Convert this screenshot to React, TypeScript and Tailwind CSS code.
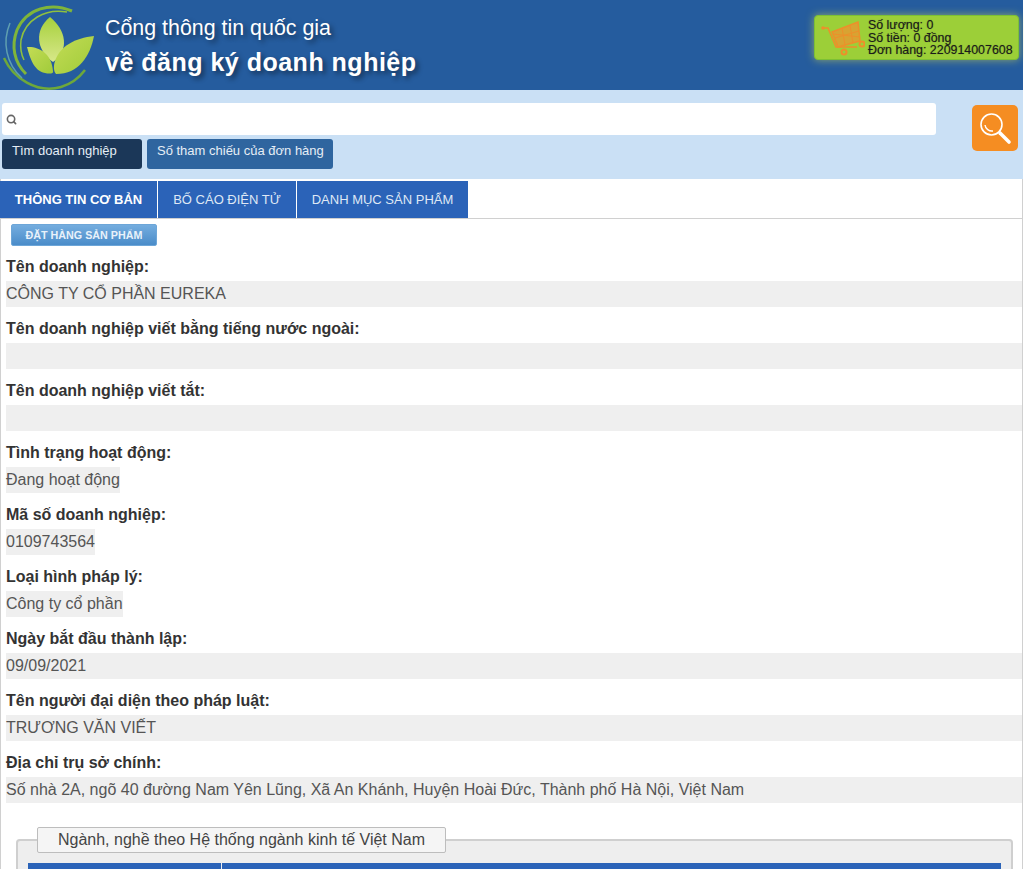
import { Search } from 'lucide-react'

const fields = [
  { label: 'Tên doanh nghiệp:', value: 'CÔNG TY CỔ PHẦN EUREKA', full: true },
  { label: 'Tên doanh nghiệp viết bằng tiếng nước ngoài:', value: '', full: true },
  { label: 'Tên doanh nghiệp viết tắt:', value: '', full: true },
  { label: 'Tình trạng hoạt động:', value: 'Đang hoạt động', full: false },
  { label: 'Mã số doanh nghiệp:', value: '0109743564', full: false },
  { label: 'Loại hình pháp lý:', value: 'Công ty cổ phần', full: false },
  { label: 'Ngày bắt đầu thành lập:', value: '09/09/2021', full: true },
  { label: 'Tên người đại diện theo pháp luật:', value: 'TRƯƠNG VĂN VIẾT', full: true },
  {
    label: 'Địa chỉ trụ sở chính:',
    value: 'Số nhà 2A, ngõ 40 đường Nam Yên Lũng, Xã An Khánh, Huyện Hoài Đức, Thành phố Hà Nội, Việt Nam',
    full: true,
  },
]

function Logo() {
  return (
    <svg width="96" height="90" viewBox="0 0 96 90" className="shrink-0">
      <defs>
        <linearGradient id="leaf" x1="0" y1="0" x2="0" y2="1">
          <stop offset="0" stopColor="#a6d03c" />
          <stop offset="1" stopColor="#d8e88a" />
        </linearGradient>
        <linearGradient id="leafSide" x1="0" y1="0" x2="1" y2="1">
          <stop offset="0" stopColor="#c3dc55" />
          <stop offset="1" stopColor="#a0cb3a" />
        </linearGradient>
      </defs>
      <path d="M71 11 C50 2 26 8 16 30 C10 46 13 62 25 74" fill="none" stroke="#7fb53a" strokeWidth="3" />
      <path d="M66 12 C44 8 24 20 20 40 C19 48 20 54 23 60" fill="none" stroke="#8fc03f" strokeWidth="1.5" />
      <path d="M3 58 C12 78 36 94 60 87 C70 84 78 78 84 70" fill="none" stroke="#6ea83a" strokeWidth="2.5" />
      <path d="M9 23 C1 42 5 64 21 78" fill="none" stroke="#5f9fb0" strokeWidth="1.5" />
      <path d="M49 17 C33 30 35 50 52 62 C69 50 65 30 49 17 Z" fill="url(#leaf)" />
      <path d="M26 47 C37 46 51 53 52 71 C53 74 48 74 44 73 C33 71 29 58 26 47 Z" fill="url(#leafSide)" />
      <path d="M93 36 C74 38 59 46 54 61 C52 67 53 72 55 74 C78 74 89 56 93 36 Z" fill="url(#leafSide)" />
    </svg>
  )
}

function Cart() {
  return (
    <svg width="44" height="36" viewBox="0 0 44 36" className="shrink-0">
      <path d="M1 8 H7 L15 27 H36" fill="none" stroke="#ee8f2a" strokeWidth="1.6" />
      <circle cx="2" cy="8" r="1.8" fill="#ee8f2a" />
      <path d="M11 12 L37 2 L39 21 L17 27 Z" fill="#d8a332" stroke="#ee8f2a" strokeWidth="1.5" />
      <path d="M14 18 L38 11 M12 14 L39 17 M21 8 L24 25 M29 5 L32 23" stroke="#ee8f2a" strokeWidth="1" />
      <circle cx="23" cy="32" r="2.5" fill="none" stroke="#ee8f2a" strokeWidth="2" />
      <circle cx="41" cy="24" r="2.5" fill="none" stroke="#ee8f2a" strokeWidth="2" />
    </svg>
  )
}

function MagnifierIcon() {
  return (
    <svg width="34" height="34" viewBox="0 0 34 34">
      <circle cx="13.5" cy="13.5" r="10.5" fill="none" stroke="#fff" strokeWidth="1.6" />
      <path d="M7 14 C7.5 18 11 20.5 15 20" fill="none" stroke="#fff" strokeWidth="1.4" />
      <path d="M22 22 L31 31" stroke="#fff" strokeWidth="3.6" strokeLinecap="round" />
    </svg>
  )
}

export default function App() {
  return (
    <div className="h-[869px] overflow-hidden bg-white font-['Liberation_Sans',Arial,sans-serif] text-[#333]">
      <header className="flex h-[90px] w-[1023px] items-center bg-[#255c9e] pl-[1px] pr-[4px]">
        <Logo />
        <div className="ml-[9px] text-white [text-shadow:3px_3px_5px_rgba(0,0,0,0.45)]">
          <div className="-ml-[1px] text-[21.4px] leading-[30px]">Cổng thông tin quốc gia</div>
          <div className="-ml-[1px] mt-[4px] text-[25px] leading-[30px] font-bold tracking-[0.5px]">về đăng ký doanh nghiệp</div>
        </div>
        <div className="mb-[15px] ml-auto flex h-[45px] w-[205px] items-center gap-[3px] rounded-[4px] border border-[#7cc034] bg-[#9ccf38] pl-[6px] text-[12.4px] leading-[12.5px] text-[#1b1b1b] shadow-[0_0_8px_rgba(190,200,90,0.7)]">
          <Cart />
          <div className="mt-[1px] whitespace-nowrap [text-shadow:0_0_1px_rgba(0,0,0,0.4)]">
            <div>Số lượng: 0</div>
            <div>Số tiền: 0 đồng</div>
            <div>Đơn hàng: 220914007608</div>
          </div>
        </div>
      </header>

      <section className="flex h-[89px] w-[1023px] items-start bg-[#cae0f5] pl-[2px] pr-[5px] pt-[13px]">
        <div className="w-[934px]">
          <div className="flex h-[32px] items-center rounded-[3px] bg-white pl-[4px] text-[#666]">
            <Search size={11} strokeWidth={3.5} />
          </div>
          <div className="mt-[4px] flex gap-[5px] text-[13px] text-[#e6eef6]">
            <div className="h-[30px] w-[140px] rounded-[3px] bg-[#1b3758] pl-[10px] pt-[5px] leading-[14px]">Tìm doanh nghiệp</div>
            <div className="h-[30px] w-[186px] rounded-[3px] bg-[#2f659f] pl-[10px] pt-[5px] leading-[14px]">Số tham chiếu của đơn hàng</div>
          </div>
        </div>
        <button className="ml-auto mt-[2px] flex h-[46px] w-[46px] items-center justify-center rounded-[5px] bg-[#f58d22]">
          <MagnifierIcon />
        </button>
      </section>

      <main className="w-[1023px] border-x border-[#d0d0d0]">
        <nav className="-ml-[1px] flex h-[40px] items-end border-b border-[#d0d0d0] text-[13px] text-[#dfe8f5]">
          <div className="flex h-[37px] w-[157px] items-center justify-center bg-[#2b63b8] font-bold text-white">THÔNG TIN CƠ BẢN</div>
          <div className="ml-[1px] flex h-[37px] w-[138px] items-center justify-center bg-[#2b63b8]">BỐ CÁO ĐIỆN TỬ</div>
          <div className="ml-[1px] flex h-[37px] w-[171px] items-center justify-center bg-[#2b63b8]">DANH MỤC SẢN PHẨM</div>
        </nav>

        <button className="ml-[10px] mt-[5px] block h-[22px] w-[146px] rounded-[2px] border border-[#6da6d8] bg-gradient-to-b from-[#74addf] to-[#4a8cc9] text-[10.75px] font-bold text-[#e8f1fa]">
          ĐẶT HÀNG SẢN PHẨM
        </button>

        <div className="-mt-[1px]">
          {fields.map((f) => (
            <div key={f.label}>
              <div className="flex h-[36px] items-end pb-[5px] pl-[5px] text-[16px] leading-[18px] font-bold text-[#333]">{f.label}</div>
              <div className={`ml-[5px] h-[26px] bg-[#efefef] text-[16px] leading-[26px] text-[#555] ${f.full ? '' : 'w-fit'}`}>
                {f.value}
              </div>
            </div>
          ))}
        </div>

        <fieldset className="ml-[15px] mt-[24px] h-[80px] w-[996px] rounded-[4px] border-2 border-[#cfcfcf] bg-[#eeeeee] px-[10px]">
          <legend className="ml-[9px] mr-auto h-[26px] w-[409px] rounded-[2px] border border-[#bdbdbd] bg-[#f5f5f5] text-center text-[16px] leading-[24px] text-[#444]">
            Ngành, nghề theo Hệ thống ngành kinh tế Việt Nam
          </legend>
          <div className="mt-[10px] flex h-[30px] w-[973px]">
            <div className="w-[193px] bg-[#2b63b8]" />
            <div className="ml-[1px] flex-1 bg-[#2b63b8]" />
          </div>
        </fieldset>
      </main>
    </div>
  )
}
